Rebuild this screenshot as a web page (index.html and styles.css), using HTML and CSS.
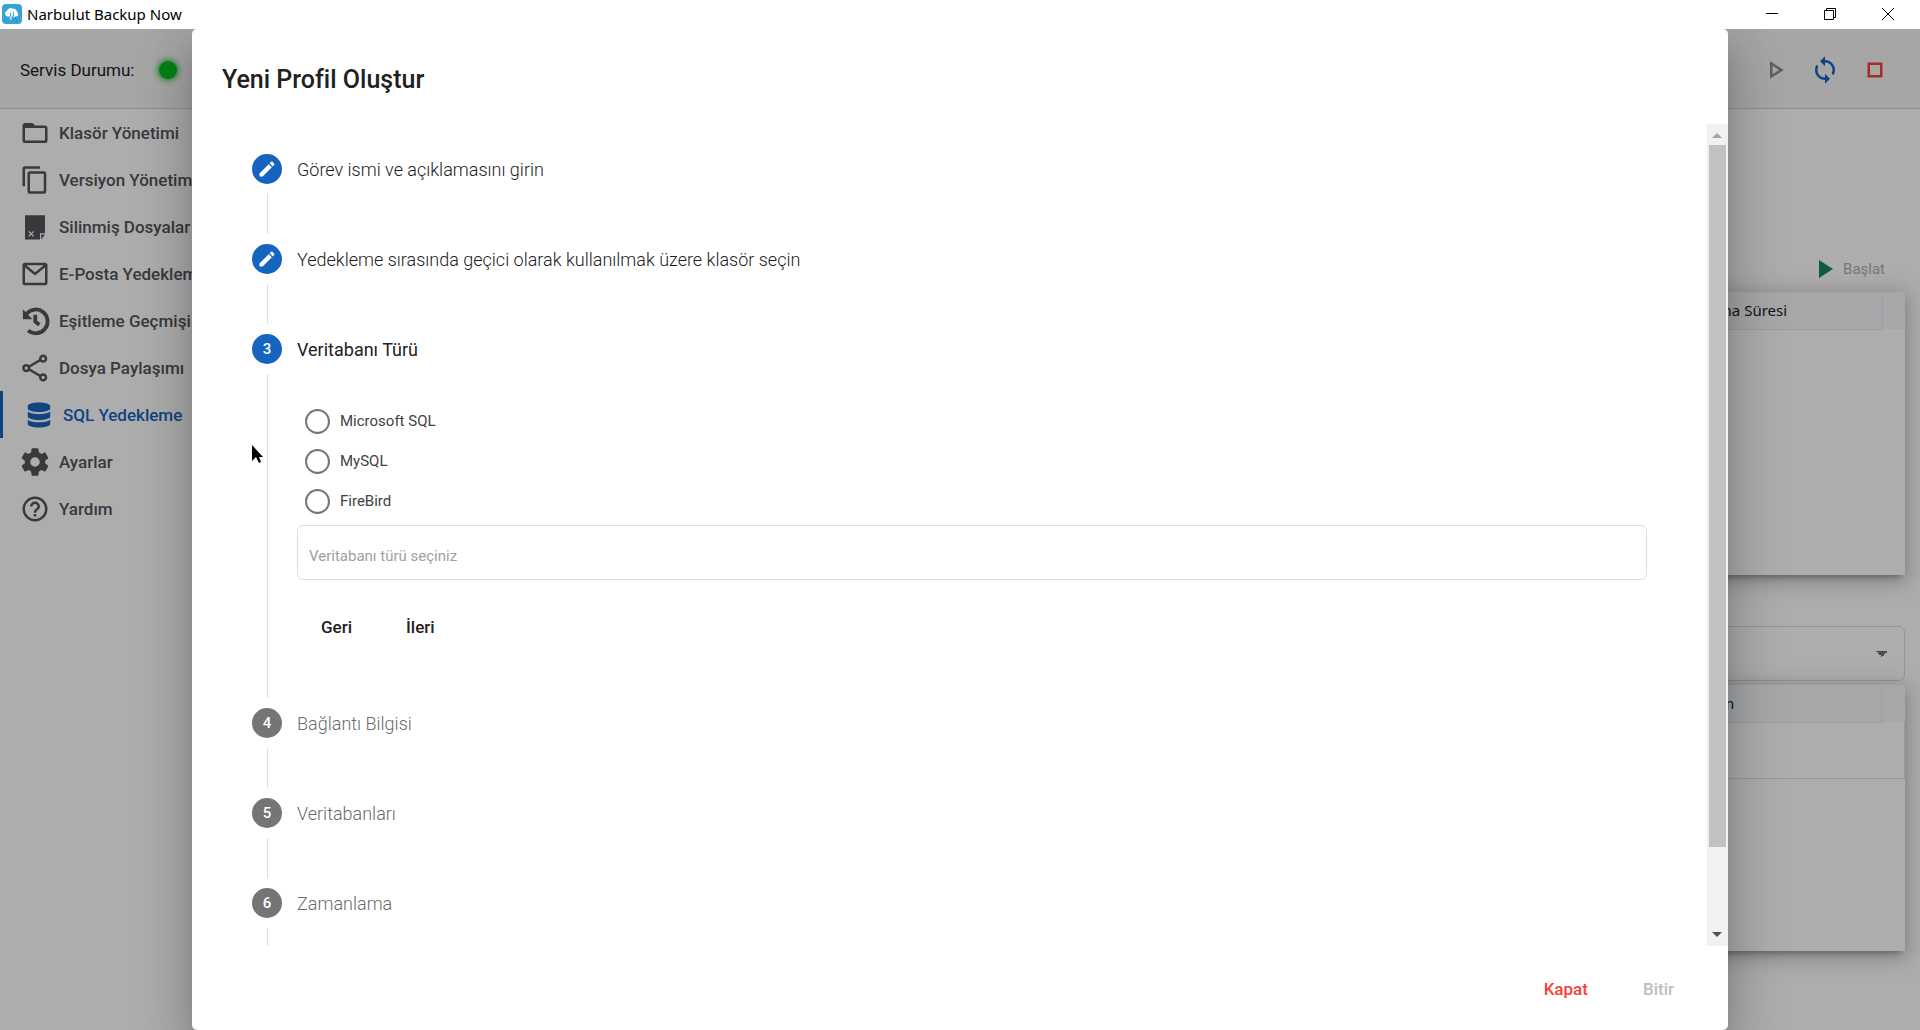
FILE: index.html
```html
<!DOCTYPE html>
<html lang="tr">
<head>
    <meta charset="UTF-8">
    <title>Narbulut Backup Now</title>
    <link rel="stylesheet" href="styles.css">
</head>
<body>
<div class="titlebar">
    <svg class="logo" viewBox="0 0 20 20"><rect width="20" height="20" rx="4" fill="#35a5d6"/><path d="M5.500 12.500a3 3 0 0 1-.5-5.800A3.800 3.800 0 0 1 11 4.800a3.600 3.600 0 0 1 3.900 3A2.600 2.600 0 0 1 14.500 12.500z" fill="#fff"/><path d="M8.500 13.500V8.500M11.300 7.500v5" stroke="#35a5d6"/><path d="M8.500 12.500v2.500h1.500M11.300 12.500l1 1" fill="none" stroke="#fff"/><path d="M11 16h1M13 14.500h1M14 17h1" stroke="#16729c"/></svg>
    <h1>Narbulut Backup Now</h1>
    <div class="winbtns">
        <button aria-label="Küçült"><svg viewBox="0 0 12 12"><path d="M0 5.500H12"/></svg></button>
        <button aria-label="Geri yükle"><svg viewBox="0 0 12 12"><path d="M.5 2.500h9v9h-9zM2.500 2.500v-2h9v9h-2"/></svg></button>
        <button aria-label="Pencereyi kapat"><svg viewBox="0 0 12 12"><path d="M0 0L12 12M12 0L0 12"/></svg></button>
    </div>
</div>

<div class="app">
    <header class="toolbar">
        <span>Servis Durumu:</span>
        <i class="dot"></i>
        <div class="tools">
            <button class="play" aria-label="Başlat" disabled><svg viewBox="0 0 24 24"><path d="M8 5v14l11-7zM10 8.640L15.270 12 10 15.360z" fill-rule="evenodd"/></svg></button>
            <button class="sync" aria-label="Yenile"><svg viewBox="0 0 24 24"><path d="M12 4V1L8 5l4 4V6c3.310 0 6 2.690 6 6 0 1.010-.25 1.970-.7 2.800l1.460 1.460C19.540 15.030 20 13.570 20 12c0-4.420-3.580-8-8-8zm0 14c-3.310 0-6-2.690-6-6 0-1.010.25-1.970.7-2.800L5.240 7.740C4.460 8.970 4 10.430 4 12c0 4.420 3.580 8 8 8v3l4-4-4-4v3z"/></svg></button>
            <button class="stop" aria-label="Durdur"><svg viewBox="0 0 24 24"><path d="M6 6v12h12V6zM8 8h8v8H8z" fill-rule="evenodd"/></svg></button>
        </div>
    </header>

    <div class="page">
        <nav class="menu">
            <a href="#"><svg viewBox="0 0 24 24"><path d="M20,18H4V8H20M20,6H12L10,4H4C2.890,4 2,4.890 2,6V18A2,2 0 0,0 4,20H20A2,2 0 0,0 22,18V8C22,6.890 21.100,6 20,6Z"/></svg>Klasör Yönetimi</a>
            <a href="#"><svg viewBox="0 0 24 24"><path d="M19,21H8V7H19M19,5H8A2,2 0 0,0 6,7V21A2,2 0 0,0 8,23H19A2,2 0 0,0 21,21V7A2,2 0 0,0 19,5M16,1H4A2,2 0 0,0 2,3V17H4V3H16V1Z"/></svg>Versiyon Yönetimi</a>
            <a href="#"><svg viewBox="0 0 24 24"><path d="M4 2.500h16V17h-4v5H4zM17 22v-4h3z"/><path class="cut" d="M7 15.500l4 4M11 15.500l-4 4"/></svg>Silinmiş Dosyalar</a>
            <a href="#"><svg viewBox="0 0 24 24"><path class="line thin" d="M4 4h16a1 1 0 0 1 1 1v14a1 1 0 0 1-1 1H4a1 1 0 0 1-1-1V5a1 1 0 0 1 1-1zM3.500 5l8.500 7 8.500-7"/></svg>E-Posta Yedekleme</a>
            <a href="#"><svg viewBox="0 0 24 24"><path class="line" d="M5.300 6.200A9.500 9.500 0 1 1 6.500 19.600M12.200 7v5.500l3.300 2.500"/><path d="M2.300 2.500v8H10z"/></svg>Eşitleme Geçmişi</a>
            <a href="#"><svg viewBox="0 0 24 24"><g class="line thin"><circle cx="5" cy="12" r="2.300"/><circle cx="18.500" cy="4.500" r="2.300"/><circle cx="18.500" cy="19.500" r="2.300"/><path d="M7 11l9.500-5.500M7 13l9.500 5.500"/></g></svg>Dosya Paylaşımı</a>
            <a href="#" class="active"><svg viewBox="0 0 24 24"><path d="M3 5c0-4 18-4 18 0v1.500c0 4-18 4-18 0zM3 9.200c3 2.800 15 2.800 18 0V13c0 4-18 4-18 0zM3 15.700c3 2.800 15 2.800 18 0V19c0 4-18 4-18 0z"/></svg>SQL Yedekleme</a>
            <a href="#"><svg viewBox="1 1 22 22"><path fill-rule="evenodd" d="M19.430 12.980c.04-.32.07-.64.07-.98s-.03-.66-.07-.98l2.110-1.650c.19-.15.24-.42.12-.64l-2-3.460c-.12-.22-.39-.3-.61-.22l-2.490 1c-.52-.4-1.080-.73-1.690-.98l-.38-2.650C14.460 2.180 14.250 2 14 2h-4c-.25 0-.46.18-.49.42l-.38 2.650c-.61.25-1.170.59-1.690.98l-2.490-1c-.23-.09-.49 0-.61.22l-2 3.460c-.13.22-.07.49.12.64l2.110 1.650c-.04.32-.07.65-.07.98s.03.66.07.98l-2.110 1.650c-.19.15-.24.42-.12.64l2 3.460c.12.22.39.3.61.22l2.490-1c.52.4 1.080.73 1.690.98l.38 2.650c.03.24.24.42.49.42h4c.25 0 .46-.18.49-.42l.38-2.650c.61-.25 1.170-.59 1.690-.98l2.490 1c.23.09.49 0 .61-.22l2-3.460c.12-.22.07-.49-.12-.64zM12 15.500a3.500 3.500 0 1 1 0-7 3.500 3.500 0 0 1 0 7z"/></svg>Ayarlar</a>
            <a href="#"><svg viewBox="0 0 24 24"><path d="M11,18H13V16H11V18M12,2A10,10 0 0,0 2,12A10,10 0 0,0 12,22A10,10 0 0,0 22,12A10,10 0 0,0 12,2M12,20C7.590,20 4,16.410 4,12C4,7.590 7.590,4 12,4C16.410,4 20,7.590 20,12C20,16.410 16.410,20 12,20M12,6A4,4 0 0,0 8,10H10A2,2 0 0,1 12,8A2,2 0 0,1 14,10C14,12 11,11.750 11,15H13C13,12.750 16,12.500 16,10A4,4 0 0,0 12,6Z"/></svg>Yardım</a>
        </nav>
        <main class="content">
            <div class="actions">
                <button class="start" disabled><svg viewBox="0 0 14 18"><path d="M0 0v18l14-9z"/></svg>Başlat</button>
            </div>
            <div class="card jobs">
                <table>
                    <tr><th></th><th class="last">Çalışma Süresi</th><th class="gutter"></th></tr>
                </table>
            </div>
            <select class="filter" aria-label="Profil"><option></option></select>
            <div class="card logs">
                <table>
                    <tr><th></th><th class="last">Durum</th><th class="gutter"></th></tr>
                    <tr><td colspan="3"></td></tr>
                </table>
            </div>
        </main>
    </div>

    <div class="overlay">
        <div class="dialog" role="dialog" aria-labelledby="dlgTitle">
            <h2 id="dlgTitle">Yeni Profil Oluştur</h2>
            <div class="scroller">
                <ol class="steps">
                    <li class="done">
                        <div class="head"><span class="num"><svg viewBox="0 0 24 24"><path d="M3 17.250V21h3.750L17.810 9.940l-3.750-3.750zM20.710 7.040c.39-.39.39-1.020 0-1.410l-2.340-2.340c-.39-.39-1.020-.39-1.410 0l-1.830 1.830 3.750 3.750z"/></svg></span>Görev ismi ve açıklamasını girin</div>
                    </li>
                    <li class="done">
                        <div class="head"><span class="num"><svg viewBox="0 0 24 24"><path d="M3 17.250V21h3.750L17.810 9.940l-3.750-3.750zM20.710 7.040c.39-.39.39-1.020 0-1.410l-2.340-2.340c-.39-.39-1.020-.39-1.410 0l-1.830 1.830 3.750 3.750z"/></svg></span>Yedekleme sırasında geçici olarak kullanılmak üzere klasör seçin</div>
                    </li>
                    <li class="current">
                        <div class="head"><span class="num">3</span>Veritabanı Türü</div>
                        <div class="body">
                            <label class="radio"><input type="radio" name="db">Microsoft SQL</label>
                            <label class="radio"><input type="radio" name="db">MySQL</label>
                            <label class="radio"><input type="radio" name="db">FireBird</label>
                            <input class="field" type="text" placeholder="Veritabanı türü seçiniz" aria-label="Veritabanı türü" readonly>
                            <div class="nav">
                                <button>Geri</button>
                                <button>İleri</button>
                            </div>
                        </div>
                    </li>
                    <li><div class="head"><span class="num">4</span>Bağlantı Bilgisi</div></li>
                    <li><div class="head"><span class="num">5</span>Veritabanları</div></li>
                    <li><div class="head"><span class="num">6</span>Zamanlama</div></li>
                </ol>
                <div class="scrollbar"><i class="up"></i><div class="track"><div class="thumb"></div></div><i class="down"></i></div>
            </div>
            <div class="footer">
                <button class="close">Kapat</button>
                <button class="finish" disabled>Bitir</button>
            </div>
        </div>
    </div>
    <svg class="cursor" viewBox="0 0 11 18"><path d="M0 0v16l4-4 3 6 2-1-2-5h4z"/></svg>
</div>
</body>
</html>
```
FILE: styles.css
```css
*{margin: 0; padding: 0; box-sizing: border-box}
html, body{height: 100%}
body{
    display: flex;
    flex-direction: column;
    font-family: Roboto, "Liberation Sans", sans-serif;
    font-size: 17px;
    color: #212121;
    overflow: hidden;
}
button{
    border: 0;
    background: none;
    font: inherit;
    color: inherit;
}
ol{list-style: none}
a{text-decoration: none; color: inherit}

/* window title */
.titlebar{
    display: flex;
    align-items: center;
    flex: none;
    height: 29px;
    padding: 0 3px 1px 2px;
    background: #fff;
}
.logo{width: 20px; height: 20px}
.titlebar h1{
    margin-left: 5px;
    font: 15px "Noto Sans", sans-serif;
    color: #000;
}
.winbtns{
    display: flex;
    margin-left: auto;
}
.winbtns button{
    width: 58px;
    height: 28px;
}
.winbtns svg{
    width: 12px;
    height: 12px;
    fill: none;
    stroke: #000;
}

.app{
    position: relative;
    flex: 1;
    display: flex;
    flex-direction: column;
    min-height: 0;
    overflow: hidden;
}
.toolbar{
    display: flex;
    align-items: center;
    flex: none;
    height: 80px;
    padding: 2px 30px 0 20px;
    background: #f5f5f5;
    border-bottom: 1px solid #d4d4d4;
}
.dot{
    width: 18px;
    height: 18px;
    margin-left: 25px;
    border-radius: 50%;
    background: #06c01e;
    box-shadow: 0 0 6px 1px #06c01e;
}
.tools{
    display: flex;
    gap: 20px;
    margin-left: auto;
}
.tools svg{
    display: block;
    width: 30px;
    height: 30px;
}
.play{fill: #8c8c8c}
.sync{fill: #1565c0}
.stop{fill: #f44336}

.page{
    display: flex;
    flex: 1;
    min-height: 0;
}
.menu{
    flex: none;
    width: 240px;
}
.menu a{
    display: flex;
    align-items: center;
    gap: 9px;
    height: 47px;
    padding-left: 20px;
    font-weight: 500;
    color: #55555a;
    white-space: nowrap;
}
.menu .active{
    border-left: 3px solid #1565c0;
    padding-left: 21px;
    color: #1565c0;
}
.menu svg{
    width: 30px;
    height: 30px;
    fill: currentColor;
}
.menu .line{
    fill: none;
    stroke: currentColor;
    stroke-width: 3;
}
.menu .thin{stroke-width: 2}
.menu .cut{stroke: #fff; stroke-width: 1}

.content{
    flex: 1;
    padding: 140px 15px 0 0;
}
.actions{
    display: flex;
    justify-content: flex-end;
    align-items: center;
    height: 43px;
    padding: 0 20px 3px 0;
}
.start{
    display: flex;
    align-items: center;
    gap: 10px;
    font-size: 15px;
    color: #b0b0b0;
}
.start svg{
    width: 14px;
    height: 18px;
    fill: #188754;
}
.card{
    background: #fff;
    box-shadow: 0 6px 6px -4px rgba(0, 0, 0, .3), 0 4px 20px 3px rgba(0, 0, 0, .25);
}
.jobs{height: 283px}
.logs{height: 266px}
.card table{
    width: 100%;
    border-collapse: collapse;
    table-layout: fixed;
}
.card th{
    height: 37px;
    background: #f5f7fa;
    font: 15px "Noto Sans", sans-serif;
    text-align: left;
}
.card .last{
    width: 213px;
    padding-left: 16px;
    border-right: 1px solid #e6e9ee;
    border-bottom: 1px solid #e6e9ee;
}
.card .gutter{width: 23px}
.card td{
    height: 56px;
    border-bottom: 1px solid #e0e0e0;
    border-right: 1px solid #e0e0e0;
}
.filter{
    display: block;
    width: 100%;
    height: 55px;
    margin: 51px 0 4px;
    border: 1px solid #dcdcdc;
    border-radius: 6px;
    appearance: none;
    background: linear-gradient(to bottom left, #757575 50%, transparent 50%) no-repeat right 22px center / 6px 6px, linear-gradient(to bottom right, #757575 50%, transparent 50%) no-repeat right 16px center / 6px 6px, #fff;
}

/* dialog */
.overlay{
    position: absolute;
    inset: 0;
    display: flex;
    justify-content: center;
    background: rgba(0, 0, 0, .32);
}
.dialog{
    display: flex;
    flex-direction: column;
    width: 80%;
    border-radius: 5px;
    background: #fff;
    box-shadow: 0 14px 19px -9px rgba(0, 0, 0, .2), 0 30px 48px 4px rgba(0, 0, 0, .14), 0 11px 58px 10px rgba(0, 0, 0, .12);
}
.dialog h2{
    padding: 31px 30px 24px;
    font-size: 25px;
    font-weight: 500;
    line-height: 40px;
}
.scroller{
    display: flex;
    flex: 1;
    min-height: 0;
}
.steps{
    flex: 1;
    padding: 0 30px;
    overflow: hidden;
}
.steps li{
    position: relative;
    color: #6a6a6a;
}
/* connecting line to the next step */
.steps li:after{
    content: "";
    position: absolute;
    left: 45px;
    top: 70px;
    bottom: -20px;
    border-left: 1px solid #dedede;
}
.head{
    display: flex;
    align-items: center;
    gap: 15px;
    height: 90px;
    padding: 0 30px;
    font-size: 18px;
    font-weight: 300;
}
.num{
    display: flex;
    align-items: center;
    justify-content: center;
    width: 30px;
    height: 30px;
    border-radius: 50%;
    background: #757575;
    color: #fff;
    font-size: 15px;
    font-weight: 500;
}
.num svg{
    width: 20px;
    height: 20px;
    fill: #fff;
}
.done .num, .current .num{background: #1565c0}
.steps .done{color: #212121}
.steps .current{color: #212121}
.current .head{font-weight: 400}
.body{
    padding: 7px 30px 29px 75px;
}
.radio{
    display: flex;
    align-items: center;
    gap: 10px;
    height: 40px;
    padding-left: 8px;
    font-size: 15px;
    color: #424242;
}
.radio input{
    appearance: none;
    width: 25px;
    height: 25px;
    border: 2px solid #757575;
    border-radius: 50%;
}
.field{
    display: block;
    width: 100%;
    height: 55px;
    margin-top: 4px;
    padding: 7px 11px 0;
    border: 1px solid #dedede;
    border-radius: 6px;
    font: 15px Roboto, sans-serif;
}
.field::placeholder{color: #a0a0a0}
.nav{
    display: flex;
    gap: 10px;
    margin-top: 24px;
}
.nav button{
    height: 45px;
    padding: 0 20px 0 24px;
    font-weight: 500;
}
.scrollbar{
    display: flex;
    flex-direction: column;
    width: 21px;
    background: #f1f1f1;
}
.scrollbar i{
    flex: none;
    height: 21px;
}
.up:after, .down:after{
    content: "";
    display: block;
    margin: 9px 5px;
    border: 5px solid transparent;
    border-top-width: 0;
    border-bottom-color: #a3a3a3;
    width: 0;
}
.down:after{
    margin-top: 7px;
    border-top: 5px solid #505050;
    border-bottom: 0;
}
.track{
    flex: 1;
    padding: 0 2px;
}
.thumb{
    height: 90%;
    background: #c1c1c1;
}
.footer{
    display: flex;
    justify-content: flex-end;
    gap: 15px;
    height: 84px;
    padding: 20px 34px;
    font-weight: 500;
}
.footer button{
    height: 45px;
    padding: 0 20px;
}
.close{color: #f44336}
.finish{color: #bdbdbd}

.cursor{
    position: absolute;
    left: 252px;
    top: 416px;
    width: 11px;
    height: 18px;
}
```
